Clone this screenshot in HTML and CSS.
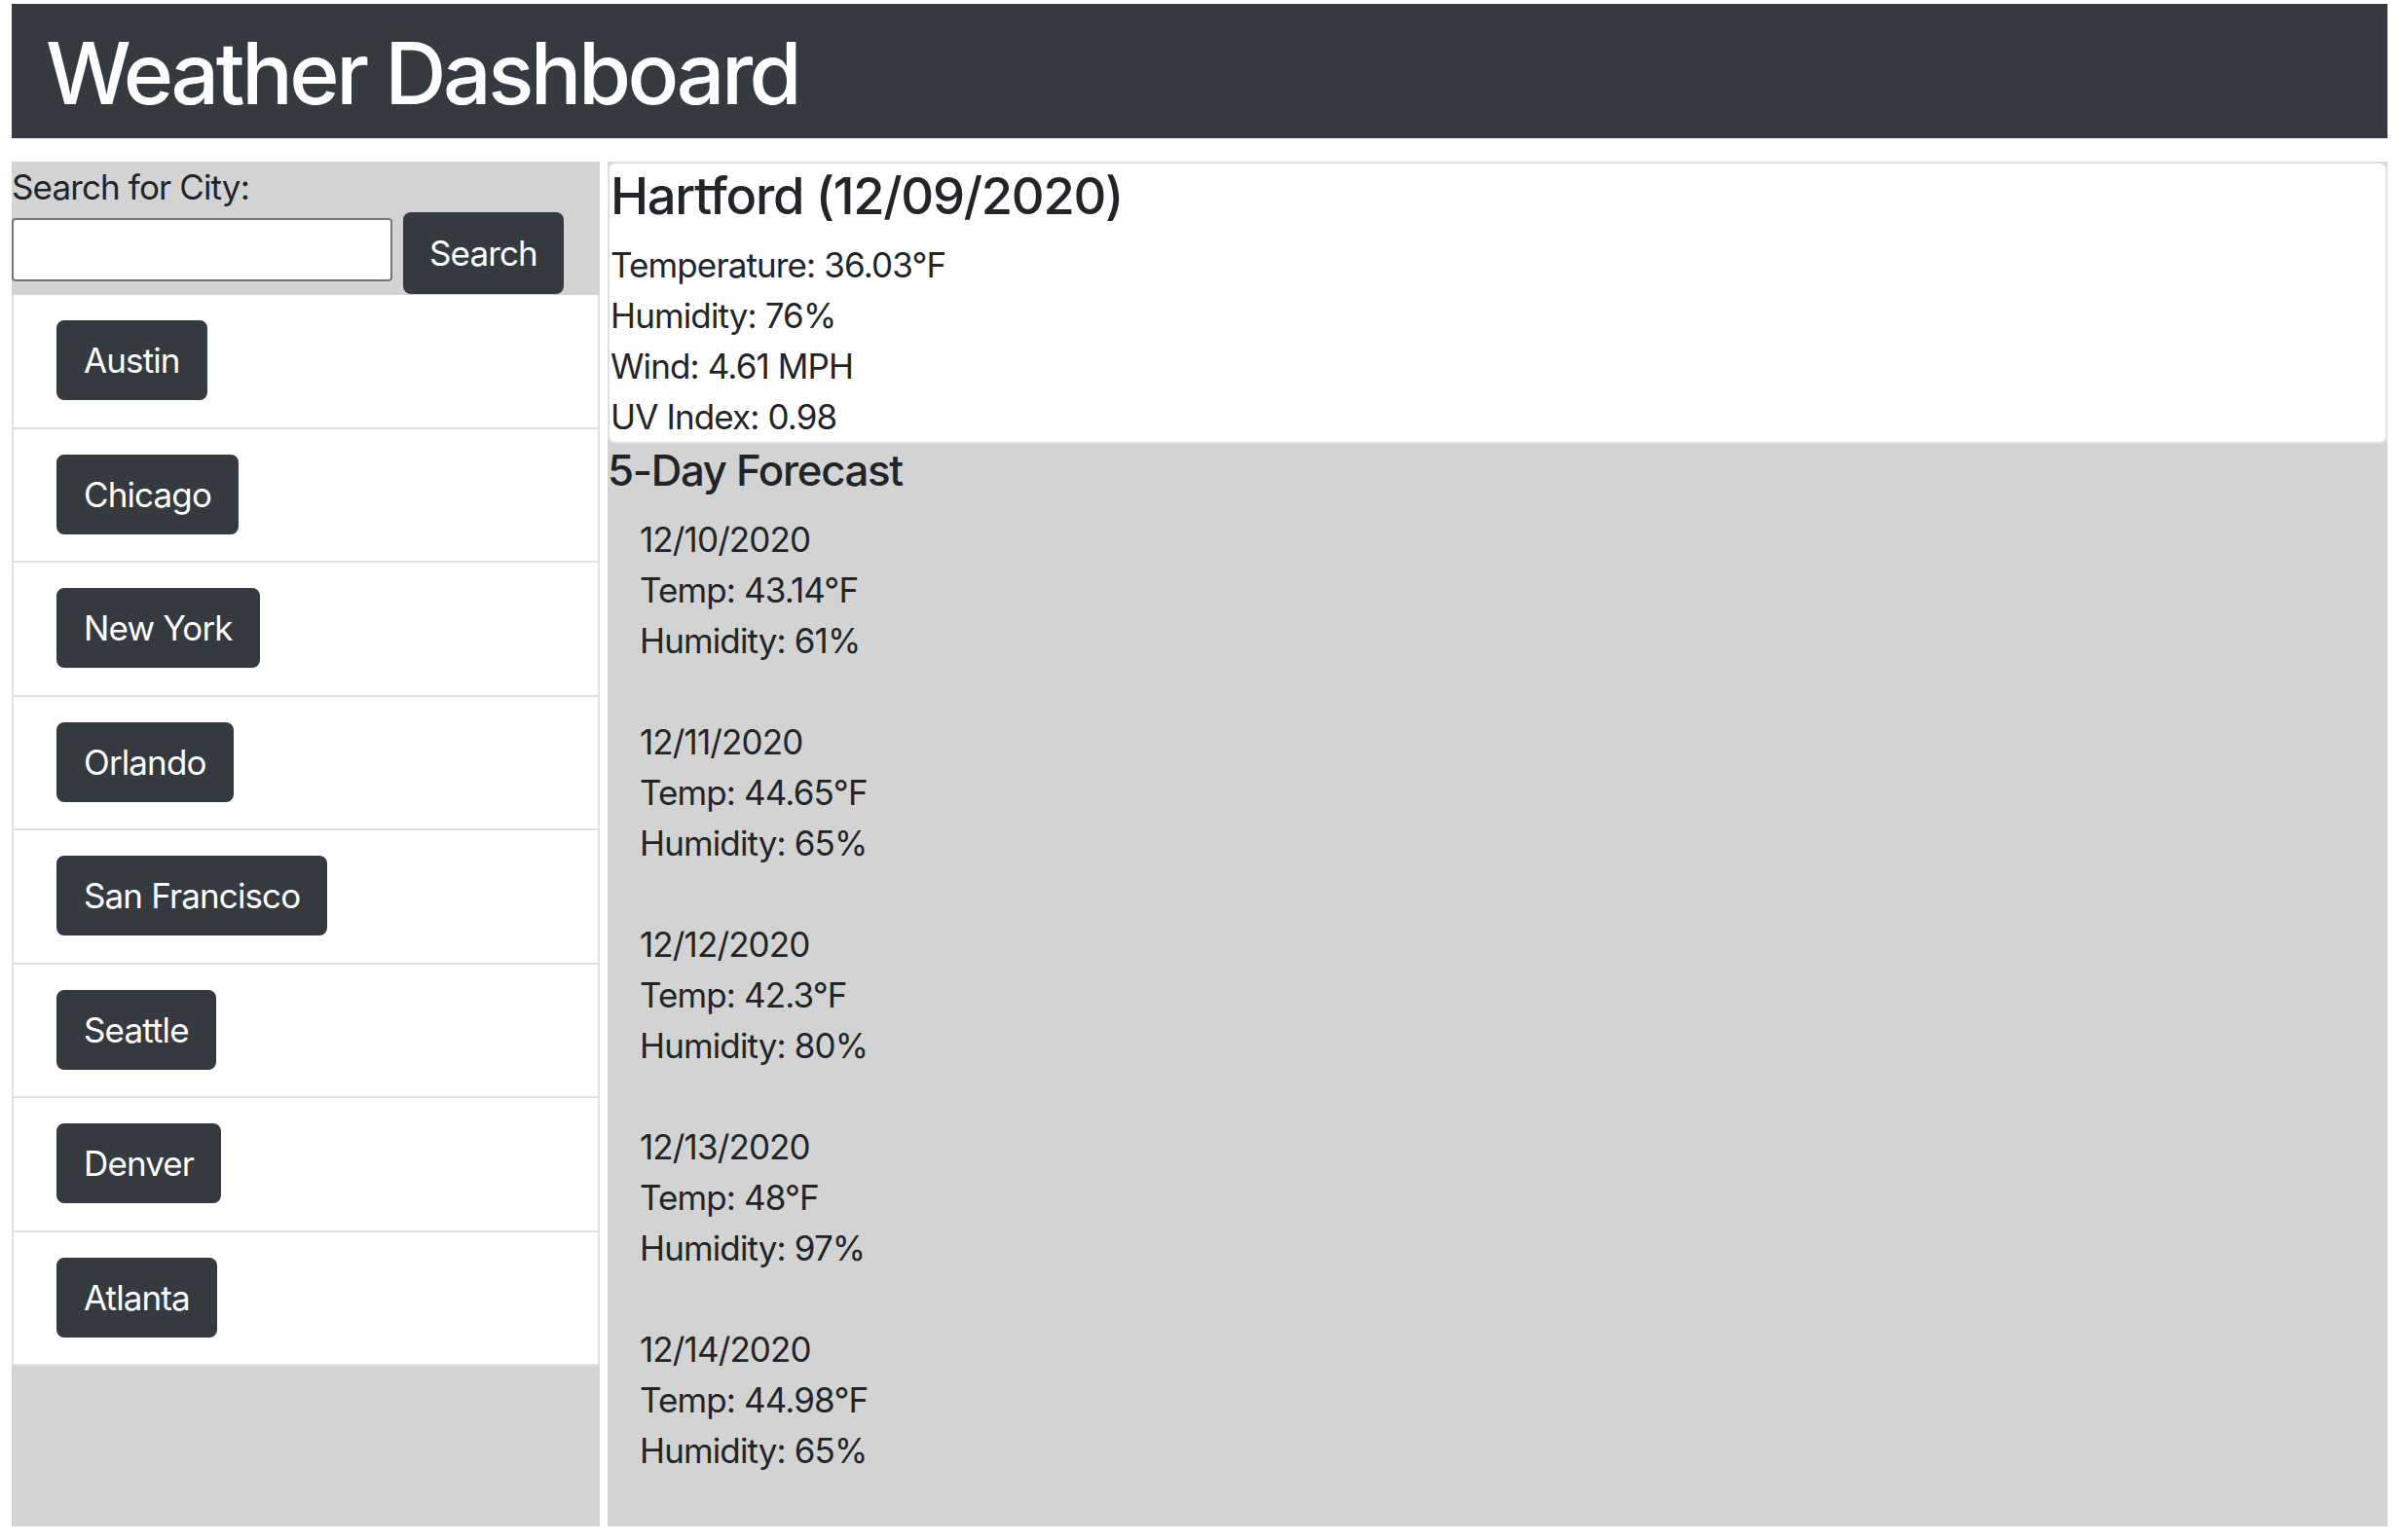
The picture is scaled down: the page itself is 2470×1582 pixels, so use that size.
FILE: index.html
```html
<!DOCTYPE html>
<html lang="en">
<head>
<meta charset="utf-8">
<title>Weather Dashboard</title>
<link rel="stylesheet" href="styles.css">
</head>
<body>
<header class="topbar">
  <h1 class="topbar-title">Weather Dashboard</h1>
</header>
<main class="layout">
  <aside class="sidebar">
    <div class="search">
      <label class="search-label" for="city">Search for City:</label>
      <div class="search-row">
        <input class="search-input" id="city" type="text">
        <button class="btn btn-search" type="button">Search</button>
      </div>
    </div>
    <ul class="city-list">
      <li class="city-item"><button class="btn" type="button">Austin</button></li>
      <li class="city-item"><button class="btn" type="button">Chicago</button></li>
      <li class="city-item"><button class="btn" type="button">New York</button></li>
      <li class="city-item"><button class="btn" type="button">Orlando</button></li>
      <li class="city-item"><button class="btn" type="button">San Francisco</button></li>
      <li class="city-item"><button class="btn" type="button">Seattle</button></li>
      <li class="city-item"><button class="btn" type="button">Denver</button></li>
      <li class="city-item"><button class="btn" type="button">Atlanta</button></li>
    </ul>
  </aside>
  <section class="content">
    <div class="current">
      <h2 class="current-title">Hartford (12/09/2020)</h2>
      <p class="line">Temperature: 36.03°F</p>
      <p class="line">Humidity: 76%</p>
      <p class="line">Wind: 4.61 MPH</p>
      <p class="line">UV Index: 0.98</p>
    </div>
    <h3 class="forecast-title">5-Day Forecast</h3>
    <div class="forecast">
      <div class="day">
        <p class="line">12/10/2020</p>
        <p class="line">Temp: 43.14°F</p>
        <p class="line">Humidity: 61%</p>
      </div>
      <div class="day">
        <p class="line">12/11/2020</p>
        <p class="line">Temp: 44.65°F</p>
        <p class="line">Humidity: 65%</p>
      </div>
      <div class="day">
        <p class="line">12/12/2020</p>
        <p class="line">Temp: 42.3°F</p>
        <p class="line">Humidity: 80%</p>
      </div>
      <div class="day">
        <p class="line">12/13/2020</p>
        <p class="line">Temp: 48°F</p>
        <p class="line">Humidity: 97%</p>
      </div>
      <div class="day">
        <p class="line">12/14/2020</p>
        <p class="line">Temp: 44.98°F</p>
        <p class="line">Humidity: 65%</p>
      </div>
    </div>
  </section>
</main>
</body>
</html>
```
FILE: styles.css
```css
* {
  box-sizing: border-box;
}

html, body {
  background: #ffffff;
}

body {
  margin: 0;
  padding: 4px 18px 0 12px;
  font-family: Inter, "Liberation Sans", sans-serif;
  font-size: 35px;
  line-height: 52px;
  color: #212529;
}

.topbar {
  height: 138px;
  background: #343a40;
  padding: 19px 0 0 35px;
}

.topbar-title {
  margin: 0;
  font-size: 87.5px;
  font-weight: 500;
  line-height: 105px;
  letter-spacing: -0.04em;
  color: #ffffff;
}

.layout {
  display: flex;
  gap: 8px;
  margin-top: 24px;
}

.sidebar {
  width: 604px;
  flex: none;
  background: #d3d3d3;
}

.search-label {
  display: block;
  height: 52px;
  letter-spacing: -0.025em;
}

.search-row {
  display: flex;
  align-items: flex-start;
  gap: 11px;
  height: 85px;
}

.search-input {
  width: 391px;
  height: 65px;
  margin-top: 6px;
  border: 2px solid #767676;
  border-radius: 4px;
  background: #ffffff;
  font: inherit;
}

.btn {
  font-family: inherit;
  font-size: 35px;
  line-height: 52px;
  letter-spacing: -0.025em;
  color: #ffffff;
  background: #343a40;
  border: 2px solid #343a40;
  border-radius: 8px;
  padding: 13px 26px;
}

.btn-search {
  height: 84px;
  padding: 14px 25px;
}

.city-list {
  list-style: none;
  margin: 0;
  padding: 0;
}

.city-item {
  background: #ffffff;
  border: 2px solid #dfdfdf;
  border-top: none;
  padding: 26px 44px 26px 44px;
  height: 137.5px;
}

.content {
  flex: 1;
  background: #d3d3d3;
}

.current {
  background: #ffffff;
  border: 2px solid #dfdfdf;
  border-radius: 8px;
  padding: 2px 2px 0 1px;
  height: 290px;
}

.current-title {
  margin: 0 0 13px;
  font-size: 52.5px;
  font-weight: 500;
  line-height: 63px;
  letter-spacing: -0.025em;
}

.line {
  margin: 0;
  line-height: 52px;
  letter-spacing: -0.025em;
}

.forecast-title {
  margin: 2px 0 17px;
  font-size: 43.75px;
  font-weight: 500;
  line-height: 52.5px;
  letter-spacing: -0.03em;
}

.forecast {
  padding-left: 33px;
}

.day {
  margin-bottom: 52px;
}
```
